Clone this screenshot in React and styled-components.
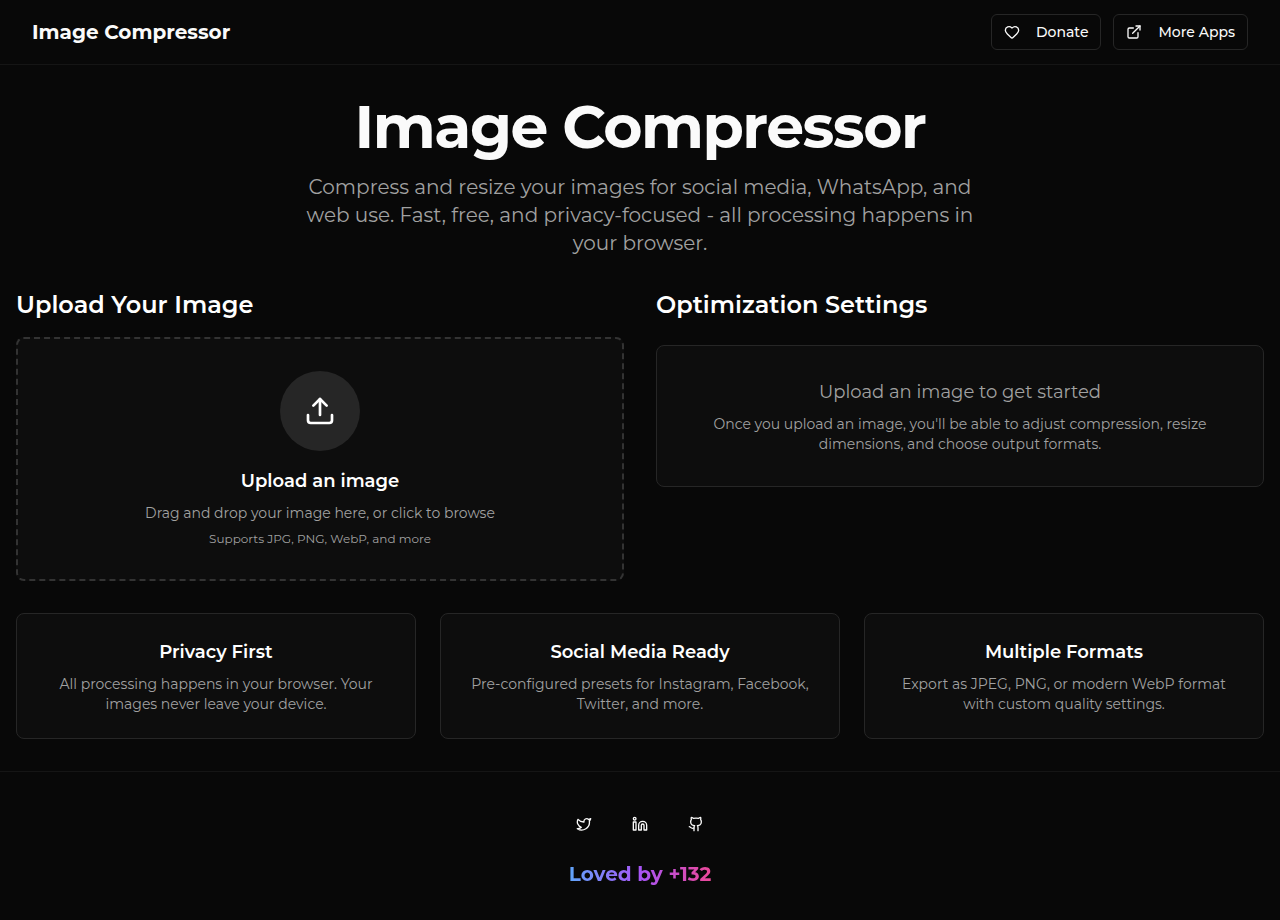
import React from 'react';
import styled, { createGlobalStyle } from 'styled-components';
import { Heart, ExternalLink, Upload, Twitter, Linkedin, Github } from 'lucide-react';

const GlobalStyle = createGlobalStyle`
  *, *::before, *::after { box-sizing: border-box; }
  body {
    margin: 0;
    background: #080808;
    color: #fafafa;
    font-family: Montserrat, Inter, sans-serif;
    font-size: 16px;
    line-height: 24px;
  }
  h1, h2, h3, p { margin: 0; }
`;

const Header = styled.header`
  display: flex;
  align-items: center;
  justify-content: space-between;
  padding: 14px 32px;
  border-bottom: 1px solid #151515;
`;

const Brand = styled.a`
  color: inherit;
  text-decoration: none;
  font-size: 20px;
  font-weight: 700;
  line-height: 28px;
`;

const Actions = styled.nav`
  display: flex;
  gap: 12px;
`;

const ActionButton = styled.button`
  display: inline-flex;
  align-items: center;
  gap: 16px;
  height: 36px;
  padding: 0 12px;
  border: 1px solid #262626;
  border-radius: 6px;
  background: transparent;
  color: inherit;
  font-family: inherit;
  font-size: 14px;
  font-weight: 500;
  line-height: 20px;
  cursor: pointer;
`;

const Main = styled.main`
  padding: 32px 16px;
`;

const Hero = styled.section`
  max-width: 672px;
  margin: 0 auto 32px;
  text-align: center;
`;

const Title = styled.h1`
  margin-bottom: 16px;
  font-size: 60px;
  font-weight: 700;
  letter-spacing: -0.025em;
  line-height: 60px;
`;

const Lead = styled.p`
  color: #a1a1a1;
  font-size: 20px;
  line-height: 28px;
`;

const Workspace = styled.div`
  display: grid;
  grid-template-columns: repeat(2, minmax(0, 1fr));
  align-items: start;
  gap: 32px;
  margin-bottom: 32px;
`;

const Column = styled.section`
  display: flex;
  flex-direction: column;
  gap: ${({ $gap }) => $gap};
`;

const SectionTitle = styled.h2`
  color: #ffffff;
  font-size: 24px;
  font-weight: 600;
  line-height: 32px;
`;

const DropZone = styled.button`
  display: flex;
  flex-direction: column;
  align-items: center;
  gap: 8px;
  width: 100%;
  padding: 32px;
  border: 2px dashed #333333;
  border-radius: 8px;
  background: #0d0d0d;
  color: #ffffff;
  font-family: inherit;
  text-align: center;
  cursor: pointer;
`;

const IconCircle = styled.span`
  display: grid;
  place-items: center;
  width: 80px;
  height: 80px;
  margin-bottom: 8px;
  border-radius: 50%;
  background: #262626;
`;

const CardTitle = styled.h3`
  color: ${({ $muted }) => ($muted ? '#a1a1a1' : '#ffffff')};
  font-size: 18px;
  font-weight: ${({ $muted }) => ($muted ? 400 : 600)};
  line-height: 28px;
`;

const CardText = styled.p`
  color: #a1a1a1;
  font-size: 14px;
  font-weight: 400;
  line-height: 20px;
`;

const Hint = styled.span`
  color: #a1a1a1;
  font-size: 12px;
  line-height: 16px;
`;

const Card = styled.article`
  display: flex;
  flex-direction: column;
  gap: 8px;
  padding: ${({ $padding }) => $padding};
  border: 1px solid #262626;
  border-radius: 8px;
  background: #0d0d0d;
  text-align: center;
`;

const Features = styled.section`
  display: grid;
  grid-template-columns: repeat(3, minmax(0, 1fr));
  gap: 24px;
`;

const Footer = styled.footer`
  display: flex;
  flex-direction: column;
  align-items: center;
  gap: 16px;
  padding: 32px 16px;
  border-top: 1px solid #151515;
`;

const Socials = styled.nav`
  display: flex;
  gap: 16px;
`;

const SocialLink = styled.a`
  display: grid;
  place-items: center;
  width: 40px;
  height: 40px;
  border-radius: 6px;
  color: inherit;
`;

const Loved = styled.p`
  background: linear-gradient(to right, #60a5fa, #a855f7, #ec4899);
  background-clip: text;
  color: transparent;
  font-size: 20px;
  font-weight: 700;
  line-height: 28px;
`;

const features = [
  {
    title: 'Privacy First',
    text: 'All processing happens in your browser. Your images never leave your device.',
  },
  {
    title: 'Social Media Ready',
    text: 'Pre-configured presets for Instagram, Facebook, Twitter, and more.',
  },
  {
    title: 'Multiple Formats',
    text: 'Export as JPEG, PNG, or modern WebP format with custom quality settings.',
  },
];

const socials = [
  { label: 'Twitter', Icon: Twitter },
  { label: 'LinkedIn', Icon: Linkedin },
  { label: 'GitHub', Icon: Github },
];

export default function App() {
  return (
    <>
      <GlobalStyle />
      <Header>
        <Brand href="#">Image Compressor</Brand>
        <Actions>
          <ActionButton type="button">
            <Heart size={16} />
            Donate
          </ActionButton>
          <ActionButton type="button">
            <ExternalLink size={16} />
            More Apps
          </ActionButton>
        </Actions>
      </Header>
      <Main>
        <Hero>
          <Title>Image Compressor</Title>
          <Lead>
            Compress and resize your images for social media, WhatsApp, and web use. Fast, free,
            and privacy-focused - all processing happens in your browser.
          </Lead>
        </Hero>
        <Workspace>
          <Column $gap="16px">
            <SectionTitle>Upload Your Image</SectionTitle>
            <DropZone type="button">
              <IconCircle>
                <Upload size={32} />
              </IconCircle>
              <CardTitle as="span">Upload an image</CardTitle>
              <CardText as="span">Drag and drop your image here, or click to browse</CardText>
              <Hint>Supports JPG, PNG, WebP, and more</Hint>
            </DropZone>
          </Column>
          <Column $gap="24px">
            <SectionTitle>Optimization Settings</SectionTitle>
            <Card $padding="32px">
              <CardTitle $muted>Upload an image to get started</CardTitle>
              <CardText>
                Once you upload an image, you'll be able to adjust compression, resize dimensions,
                and choose output formats.
              </CardText>
            </Card>
          </Column>
        </Workspace>
        <Features>
          {features.map(({ title, text }) => (
            <Card key={title} $padding="24px">
              <CardTitle>{title}</CardTitle>
              <CardText>{text}</CardText>
            </Card>
          ))}
        </Features>
      </Main>
      <Footer>
        <Socials>
          {socials.map(({ label, Icon }) => (
            <SocialLink key={label} href="#" aria-label={label}>
              <Icon size={16} />
            </SocialLink>
          ))}
        </Socials>
        <Loved>Loved by +132</Loved>
      </Footer>
    </>
  );
}
